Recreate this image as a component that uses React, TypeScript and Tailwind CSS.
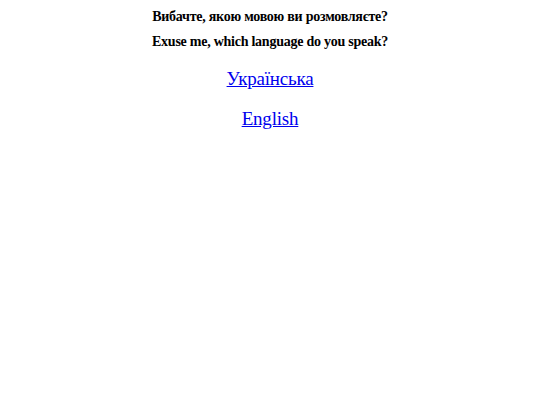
import React from 'react';

const App: React.FC = () => {
  return (
    <div className="min-h-screen bg-white text-black text-center font-['Liberation_Serif',serif]">
      <div className="pt-[8px]">
        <p className="text-[14px] font-bold leading-[17px] tracking-[-0.25px]">Вибачте, якою мовою ви розмовляєте?</p>
        <p className="mt-[8px] text-[14px] font-bold leading-[17px] tracking-[-0.25px]">Exuse me, which language do you speak?</p>
      </div>
      <div className="mt-[17px] flex flex-col items-center gap-[17px]">
        <a href="#uk" className="text-[19px] leading-[23px] tracking-[-0.2px] text-[#0000ee] underline">Українська</a>
        <a href="#en" className="text-[19px] leading-[23px] tracking-[-0.2px] text-[#0000ee] underline">English</a>
      </div>
    </div>
  );
};

export default App;
